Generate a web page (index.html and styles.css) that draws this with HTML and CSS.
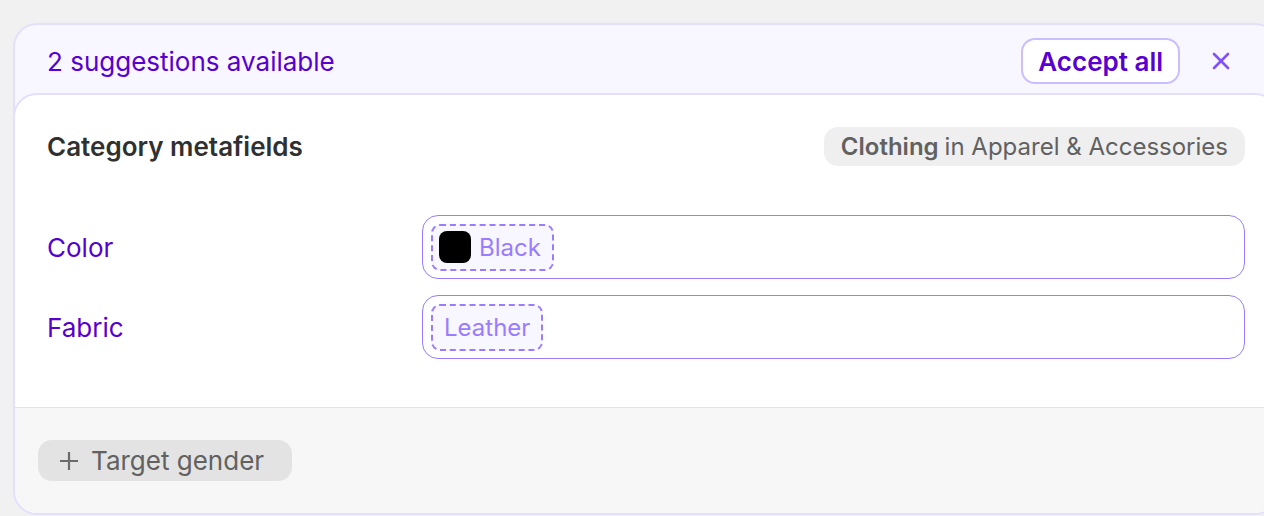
FILE: index.html
```html
<!DOCTYPE html>
<html lang="en">
<head>
<meta charset="utf-8">
<title>Suggestions</title>
<link rel="stylesheet" href="styles.css">
</head>
<body>
<div class="card">
  <div class="card-header">
    <span class="header-title">2 suggestions available</span>
    <div class="header-actions">
      <button class="accept-btn">Accept all</button>
      <button class="close-btn" aria-label="Dismiss">
        <svg width="18" height="18" viewBox="0 0 18 18"><path d="M2 2 L16 16 M16 2 L2 16" stroke="currentColor" stroke-width="2.6" stroke-linecap="round" fill="none"/></svg>
      </button>
    </div>
  </div>
  <div class="panel">
    <div class="panel-body">
      <div class="panel-head">
        <h2 class="panel-title">Category metafields</h2>
        <span class="category-badge"><b>Clothing</b> in Apparel &amp; Accessories</span>
      </div>
      <div class="fields">
        <div class="field-row">
          <span class="field-label">Color</span>
          <div class="field-input">
            <span class="chip"><span class="swatch"></span>Black</span>
          </div>
        </div>
        <div class="field-row">
          <span class="field-label">Fabric</span>
          <div class="field-input">
            <span class="chip">Leather</span>
          </div>
        </div>
      </div>
    </div>
    <div class="panel-footer">
      <button class="add-btn">
        <svg width="20" height="20" viewBox="0 0 20 20"><path d="M10 1 V19 M1 10 H19" stroke="currentColor" stroke-width="2.2" fill="none"/></svg>
        Target gender
      </button>
    </div>
  </div>
</div>
</body>
</html>
```
FILE: styles.css
```css
* { box-sizing: border-box; }
html, body { margin: 0; padding: 0; }
body {
  background: #f1f1f1;
  font-family: Inter, "Noto Sans", sans-serif;
  overflow: hidden;
  width: 1264px;
  height: 516px;
  padding: 23px 0 0 13px;
}
button { font-family: inherit; cursor: pointer; }

.card {
  width: 1266px;
  height: 492px;
  border: 2px solid #e4dffc;
  border-radius: 24px;
  background: #f8f6ff;
  overflow: hidden;
  display: flex;
  flex-direction: column;
}

.card-header {
  display: flex;
  align-items: center;
  justify-content: space-between;
  padding: 13px 32px 9px 32px;
  height: 68px;
  flex: none;
}
.header-title {
  font-size: 26px;
  color: #5700d1;
}
.header-actions {
  display: flex;
  align-items: center;
  gap: 17px;
}
.accept-btn {
  height: 46px;
  padding: 0 15px;
  background: #fff;
  border: 2px solid #cbbdff;
  border-radius: 14px;
  color: #5700d1;
  font-size: 26px;
  font-weight: 600;
}
.close-btn {
  width: 48px;
  height: 46px;
  border: none;
  background: transparent;
  color: #8051ff;
  display: flex;
  align-items: center;
  justify-content: center;
  padding: 0;
}

.panel {
  flex: 1;
  margin: 0 -2px -2px -2px;
  background: #fff;
  border: 2px solid #e4dffc;
  border-radius: 24px;
  display: flex;
  flex-direction: column;
  overflow: hidden;
}
.panel-body {
  padding: 32px 32px 48px 32px;
  border-bottom: 1px solid #e3e3e3;
}
.panel-head {
  display: flex;
  align-items: center;
  justify-content: space-between;
  height: 39px;
}
.panel-title {
  margin: 0;
  font-size: 26px;
  font-weight: 600;
  color: #303030;
}
.category-badge {
  background: #efefef;
  border-radius: 14px;
  height: 39px;
  padding: 0 17px;
  display: flex;
  align-items: center;
  font-size: 24px;
  color: #616161;
  gap: 0.25em;
}
.category-badge b { font-weight: 600; }

.fields {
  margin-top: 49px;
  display: flex;
  flex-direction: column;
  gap: 16px;
}
.field-row {
  display: grid;
  grid-template-columns: 375px 1fr;
  align-items: center;
}
.field-label {
  font-size: 26px;
  color: #5700d1;
}
.field-input {
  height: 64px;
  border: 1px solid #9a7cff;
  border-radius: 16px;
  padding: 0 8px;
  display: flex;
  align-items: center;
}
.chip {
  height: 47px;
  display: inline-flex;
  align-items: center;
  gap: 8px;
  padding: 0 11px;
  border: 2px dashed #9a7cff;
  border-radius: 9px;
  background: #f8f6ff;
  color: #9a7cff;
  font-size: 24px;
}
.chip:has(.swatch) { padding-left: 6px; }
.swatch {
  width: 32px;
  height: 32px;
  border-radius: 8px;
  background: #000;
}

.panel-footer {
  flex: 1;
  background: #f7f7f7;
  padding: 32px 23px;
}
.add-btn {
  height: 41px;
  display: inline-flex;
  align-items: center;
  gap: 12px;
  padding: 0 28px 0 21px;
  border: none;
  border-radius: 14px;
  background: #e3e3e3;
  color: #616161;
  font-size: 26px;
}
.add-btn svg { color: #6b6b6b; }
```
